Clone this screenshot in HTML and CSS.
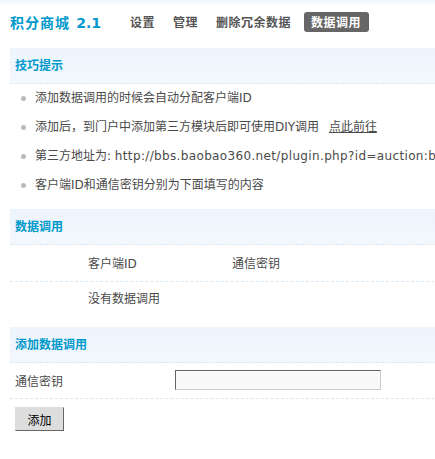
FILE: index.html
```html
<!DOCTYPE html>
<html lang="zh">
<head>
<meta charset="utf-8">
<link rel="stylesheet" href="styles.css">
</head>
<body>
<div class="page">
  <div class="topbar">
    <h3 class="title"><span class="name">积分商城</span> <span class="ver">2.1</span></h3>
    <nav class="nav">
      <a class="nav-item">设置</a>
      <a class="nav-item">管理</a>
      <a class="nav-item nav-last">删除冗余数据</a>
      <a class="nav-item active">数据调用</a>
    </nav>
  </div>

  <section class="block">
    <div class="partition">技巧提示</div>
    <ul class="tips">
      <li>添加数据调用的时候会自动分配客户端ID</li>
      <li>添加后，到门户中添加第三方模块后即可使用DIY调用 <a class="link">点此前往</a></li>
      <li>第三方地址为: <span class="url">http://bbs.baobao360.net/plugin.php?id=auction:baobao360</span></li>
      <li>客户端ID和通信密钥分别为下面填写的内容</li>
    </ul>
  </section>

  <section class="block block-data">
    <div class="partition">数据调用</div>
    <div class="row row-head">
      <span class="col-id">客户端ID</span>
      <span class="col-key">通信密钥</span>
    </div>
    <div class="row row-empty">
      <span class="col-id">没有数据调用</span>
    </div>
  </section>

  <section class="block block-add">
    <div class="partition">添加数据调用</div>
    <div class="row row-form">
      <label class="form-label">通信密钥</label>
      <input class="txt" type="text">
    </div>
    <div class="actions">
      <button class="btn" type="button">添加</button>
    </div>
  </section>
</div>
</body>
</html>
```

FILE: styles.css
```css
html, body {
  margin: 0;
  padding: 0;
  background: #fff;
  overflow: hidden;
}
body {
  font-family: Tahoma, "DejaVu Sans", "Noto Sans CJK SC", sans-serif;
  font-size: 12px;
  color: #4a4a4a;
  background: linear-gradient(#eef5fc 0, #fff 6px) no-repeat;
}
.page {
  padding-left: 10px;
  width: 700px;
}
.topbar {
  display: flex;
  align-items: center;
  height: 20px;
  padding-top: 12px;
  margin-bottom: 16px;
}
.title {
  margin: 0;
  width: 120px;
  font-size: 14px;
  font-weight: bold;
  color: #0099cc;
  font-family: "Noto Sans CJK SC", sans-serif;
  line-height: 20px;
  white-space: nowrap;
}
.name {
  letter-spacing: 1px;
}
.ver {
  font-family: "DejaVu Sans", sans-serif;
  margin-left: 3px;
}
.nav {
  display: flex;
  align-items: center;
}
.nav-item {
  font-family: "Noto Sans CJK SC", sans-serif;
  font-weight: bold;
  color: #555;
  line-height: 20px;
  letter-spacing: 0.5px;
  margin-right: 18px;
}
.nav-item.nav-last {
  margin-right: 13px;
}
.nav-item.active {
  background: #666;
  color: #fff;
  border-radius: 3px;
  padding: 0 8px 0 7px;
  margin-right: 0;
}
.partition {
  height: 35px;
  line-height: 34px;
  padding-left: 5px;
  background: linear-gradient(#edf4fc, #f3f8fd);
  color: #0099cc;
  font-weight: bold;
  font-family: "Noto Sans CJK SC", sans-serif;
  border-bottom: 1px dashed #d8e9f7;
}
.tips {
  list-style: none;
  margin: 0;
  padding: 0 0 9px 0;
}
.tips li {
  position: relative;
  height: 29px;
  line-height: 29px;
  padding-left: 25px;
  white-space: nowrap;
}
.tips li::before {
  content: "";
  position: absolute;
  left: 11px;
  top: 12px;
  width: 5px;
  height: 5px;
  border-radius: 50%;
  background: #bbb;
}
.url {
  letter-spacing: 0.35px;
}
.link {
  color: #4a4a4a;
  text-decoration: underline;
  margin-left: 6px;
}
.row {
  display: flex;
  align-items: center;
}
.row-head {
  height: 36px;
  border-bottom: 1px dashed #d8e9f7;
}
.row-head span, .row-empty span {
  position: relative;
  top: -1px;
}
.row-empty {
  height: 32px;
  margin-bottom: 13px;
}
.col-id {
  margin-left: 78px;
  width: 144px;
}
.row-form {
  height: 35px;
  padding-left: 5px;
  border-bottom: 1px dashed #dce6f0;
}
.form-label {
  width: 160px;
}
.txt {
  box-sizing: border-box;
  width: 206px;
  height: 20px;
  margin: 0 0 2px 0;
  padding: 0 3px;
  background: #f9f9f9;
  border: 1px solid;
  border-color: #666 #ccc #ccc #666;
  font-size: 12px;
}
.actions {
  padding: 8px 0 0 5px;
}
.btn {
  box-sizing: border-box;
  width: 49px;
  height: 24px;
  margin: 0;
  padding: 0;
  background: #ddd;
  border: 1px solid;
  border-color: #ddd #666 #666 #ddd;
  font-family: "Noto Sans CJK SC", sans-serif;
  font-size: 12px;
  color: #000;
}
```
